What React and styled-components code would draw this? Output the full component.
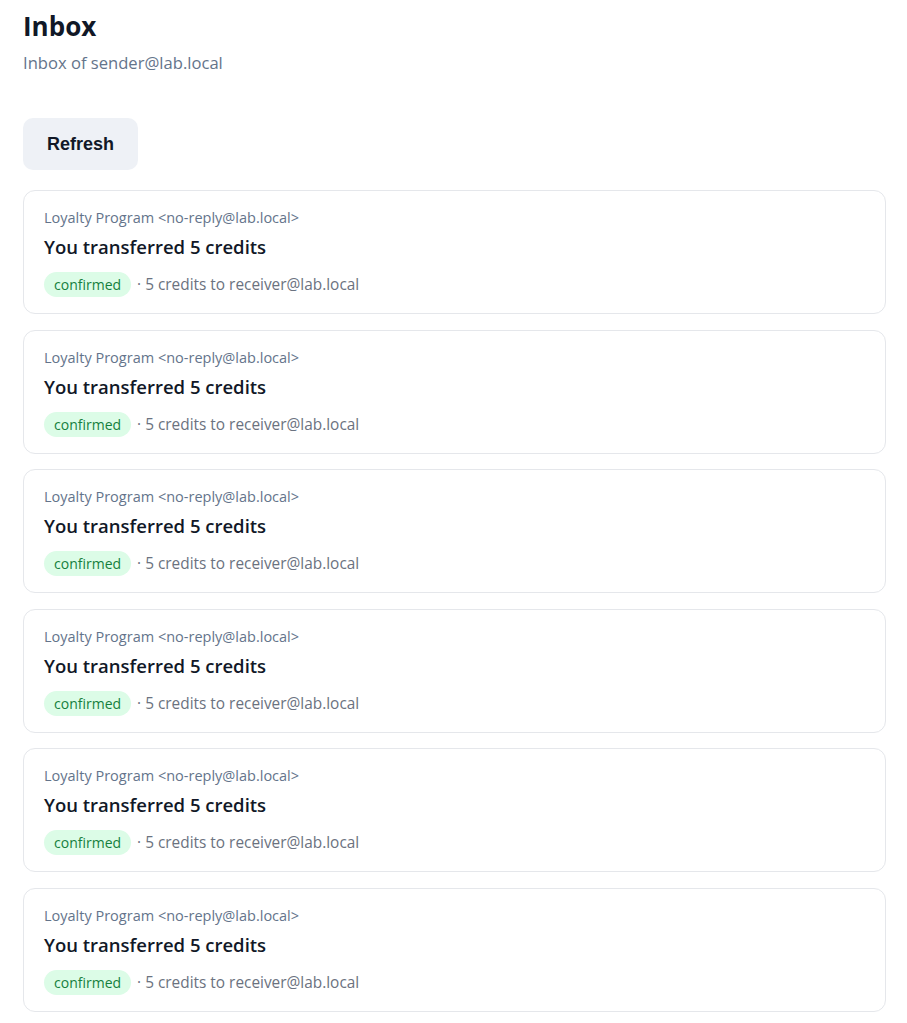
import styled, { createGlobalStyle } from "styled-components";

const GlobalStyle = createGlobalStyle`
  html, body {
    margin: 0;
    padding: 0;
    background: #fff;
  }
  body {
    font-family: "Open Sans", "Noto Sans", "Liberation Sans", sans-serif;
    color: #111827;
  }
`

const Page = styled.div`
  padding: 0 21px 0 23px;
`

const Title = styled.h1`
  margin: 0;
  padding-top: 8px;
  font-size: 26px;
  line-height: 36px;
  font-weight: 700;
  color: #111827;
`

const Subtitle = styled.p`
  margin: 7px 0 0;
  font-size: 16.6px;
  line-height: 24px;
  color: #64748b;
`

const RefreshButton = styled.button`
  display: block;
  margin-top: 43px;
  width: 115px;
  height: 52px;
  border: none;
  border-radius: 10px;
  background: #eef1f6;
  font-family: "Liberation Sans", Arial, sans-serif;
  font-size: 18px;
  font-weight: 700;
  color: #111827;
  cursor: pointer;
`

const List = styled.div`
  margin-top: 20px;
  display: flex;
  flex-direction: column;
  gap: 15.6px;
`

const Card = styled.div`
  border: 1px solid #e5e7eb;
  border-radius: 12px;
  padding: 18px 20px 16px;
  background: #fff;

  .from {
    font-size: 14.5px;
    line-height: 18px;
    color: #64748b;
  }

  .subject {
    margin-top: 7px;
    font-size: 18.5px;
    line-height: 26px;
    font-weight: 600;
    color: #111827;
  }

  .meta {
    margin-top: 12px;
    display: flex;
    align-items: center;
    gap: 6px;
    font-size: 15.4px;
    color: #6b7280;
  }
`

const Badge = styled.span`
  display: inline-flex;
  align-items: center;
  height: 25px;
  padding: 0 10px;
  border-radius: 999px;
  background: ${p => p.tone === "ok" ? "#dcfce7" : "#fef3c7"};
  color: ${p => p.tone === "ok" ? "#15803d" : "#92400e"};
  font-size: 14px;
`

const messages = Array.from({ length: 6 }, (_, i) => ({
  id: i,
  from: "Loyalty Program <no-reply@lab.local>",
  subject: "You transferred 5 credits",
  status: "confirmed",
  detail: "5 credits to receiver@lab.local",
}))

const App = () => {
  return (
    <>
      <GlobalStyle />
      <Page>
        <Title>Inbox</Title>
        <Subtitle>Inbox of sender@lab.local</Subtitle>
        <RefreshButton>Refresh</RefreshButton>
        <List>
          {messages.map(m => (
            <Card key={m.id}>
              <div className="from">{m.from}</div>
              <div className="subject">{m.subject}</div>
              <div className="meta">
                <Badge tone="ok">{m.status}</Badge>
                <span>· {m.detail}</span>
              </div>
            </Card>
          ))}
        </List>
      </Page>
    </>
  )
}

export default App
